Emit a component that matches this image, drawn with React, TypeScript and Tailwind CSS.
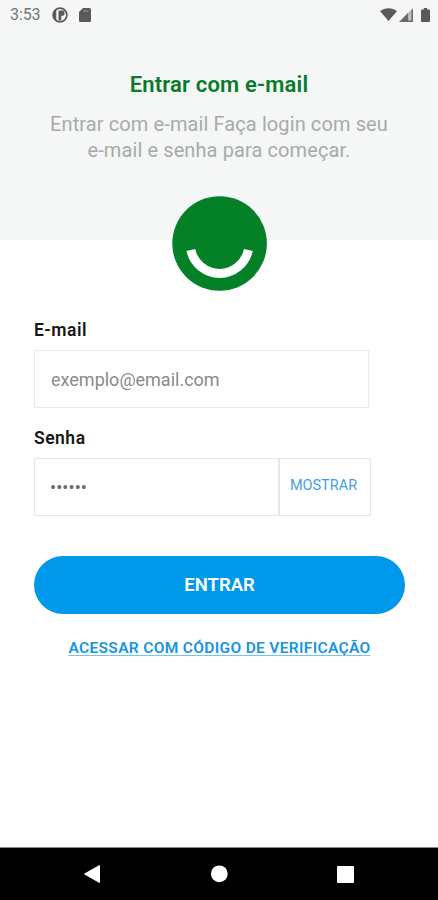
import { useState } from 'react'

function StatusBar() {
  return (
    <div className="flex h-[29px] items-center pl-[10px] pr-[8px] text-[#757775]">
      <span className="w-[42px] text-[16px] leading-[29px] tracking-[-0.1px]">3:53</span>
      <svg className="h-4 w-4" viewBox="0 0 16 16">
        <circle cx="8" cy="8" r="6.900" fill="none" stroke="#5a5a5a" strokeWidth="1.700" />
        <path d="M6.500 3.500h4.300q1.700 0 1.700 1.800v1.600q0 1.800-1.700 1.800H9.300v3.800q0 1-1 1H6.500z" fill="#5a5a5a" />
        <path d="M1.500 5.500Q2.500 3 4.300 2v12Q2 12.500 1.500 10z" fill="#5a5a5a" />
      </svg>
      <svg className="ml-[11px] h-[14px] w-[12px]" viewBox="0 0 12 14">
        <path d="M4 0h6.500A1.500 1.500 0 0 1 12 1.500v11a1.500 1.500 0 0 1-1.500 1.500h-9A1.500 1.500 0 0 1 0 12.500V4z" fill="#5a5a5a" />
        <path d="M4 3h5.500" stroke="#8a8a8a" strokeWidth="1.500" />
      </svg>
      <svg className="ml-auto h-[13px] w-[17px]" viewBox="0 0 17 13">
        <path d="M0 3.100C5 -.8 12 -.8 17 3.100L8.500 13z" fill="#5a5a5a" />
      </svg>
      <svg className="ml-[2px] h-[14px] w-[14px]" viewBox="0 0 14 14">
        <path d="M14 0v14H0z" fill="#bbb" />
        <path d="M9 5v9H0zM12.500 1.500H14V14h-1.500zM9 12.500h5V14H9z" fill="#6a6a6a" />
      </svg>
      <svg className="ml-[8px] h-[14px] w-[9px]" viewBox="0 0 9 14">
        <path d="M2.800 0h3.400v1.500H8q1 0 1 1V13q0 1-1 1H1q-1 0-1-1V2.500q0-1 1-1h1.800z" fill="#5a5a5a" />
      </svg>
    </div>
  )
}

function Logo() {
  return (
    <svg className="mx-auto -mt-[44px] h-[96px] w-[96px]" viewBox="0 0 96 96">
      <circle cx="48.600" cy="47.500" r="47.300" fill="#048026" />
      <path d="M19.900 54A29.300 29.300 0 0 0 77.300 54" fill="none" stroke="#fff" strokeWidth="9" />
    </svg>
  )
}

function NavBar() {
  return (
    <div className="mt-auto flex h-[53px] items-center border-t border-[#888] bg-black pl-[83px]">
      <svg className="h-[20px] w-[264px]" viewBox="0 0 264 20">
        <path d="M1.500 10L16.500 1.500v17z" fill="#fff" stroke="#fff" strokeLinejoin="round" />
        <circle cx="136.300" cy="9.800" r="8.400" fill="#fff" />
      </svg>
      <div className="-ml-[10px] h-[17px] w-[17px] rounded-[1px] bg-white" />
    </div>
  )
}

export default function App() {
  const [email, setEmail] = useState('')
  const [password, setPassword] = useState('')
  const [visible, setVisible] = useState(false)

  return (
    <div className="flex h-[900px] w-[438px] flex-col overflow-hidden bg-white font-['Roboto',sans-serif]">
      <header className="h-[240px] shrink-0 bg-[#f4f7f5]">
        <StatusBar />
        <h1 className="mt-[42px] text-center text-[22px] font-semibold leading-[28px] tracking-[0.18px] text-[#087a2c]">
          Entrar com e-mail
        </h1>
        <p className="mt-[12px] text-center text-[20px] leading-[26px] tracking-[0.1px] text-[#a8aba9]">
          Entrar com e-mail Faça login com seu
          <br />
          e-mail e senha para começar.
        </p>
      </header>

      <Logo />

      <main className="flex flex-col pl-[34px] pr-[33px] pt-[26px]">
        <label htmlFor="email" className="text-[17.5px] font-semibold leading-[24px] tracking-[0.5px] text-[#171717]">
          E-mail
        </label>
        <input
          id="email"
          value={email}
          onChange={(e) => setEmail(e.target.value)}
          placeholder="exemplo@email.com"
          className="mt-[8px] h-[58px] w-[335px] border border-[#e8e8e8] px-[16px] pt-[1px] text-[18px] text-[#777] outline-none placeholder:text-[#8a8a8a]"
        />
        <label htmlFor="password" className="mt-[18px] text-[17.5px] font-semibold leading-[24px] tracking-[0.5px] text-[#171717]">
          Senha
        </label>
        <div className="mt-[8px] flex h-[58px] w-[337px] border border-[#e6e6e6]">
          <input
            id="password"
            type={visible ? 'text' : 'password'}
            value={password}
            onChange={(e) => setPassword(e.target.value)}
            placeholder="••••••"
            className="w-[245px] border-r-2 border-[#e6e6e6] px-[15px] text-[18px] tracking-[0.1px] text-[#777] outline-none placeholder:text-[#6a6a6a]"
          />
          <button
            type="button"
            onClick={() => setVisible(!visible)}
            className="flex-1 pb-[2px] pr-[3px] text-[14.5px] text-[#3f9fe2]"
          >
            MOSTRAR
          </button>
        </div>
        <button
          type="button"
          className="mt-[40px] h-[58px] rounded-full bg-[#0098ea] pt-[2px] text-[18.5px] font-semibold text-white"
        >
          ENTRAR
        </button>
        <a
          href="#codigo"
          className="mt-[22px] text-center text-[15.5px] font-semibold leading-[24px] tracking-[0.34px] text-[#1594e0] underline decoration-[#79c3ed] decoration-1 underline-offset-[2px]"
        >
          ACESSAR COM CÓDIGO DE VERIFICAÇÃO
        </a>
      </main>

      <NavBar />
    </div>
  )
}
